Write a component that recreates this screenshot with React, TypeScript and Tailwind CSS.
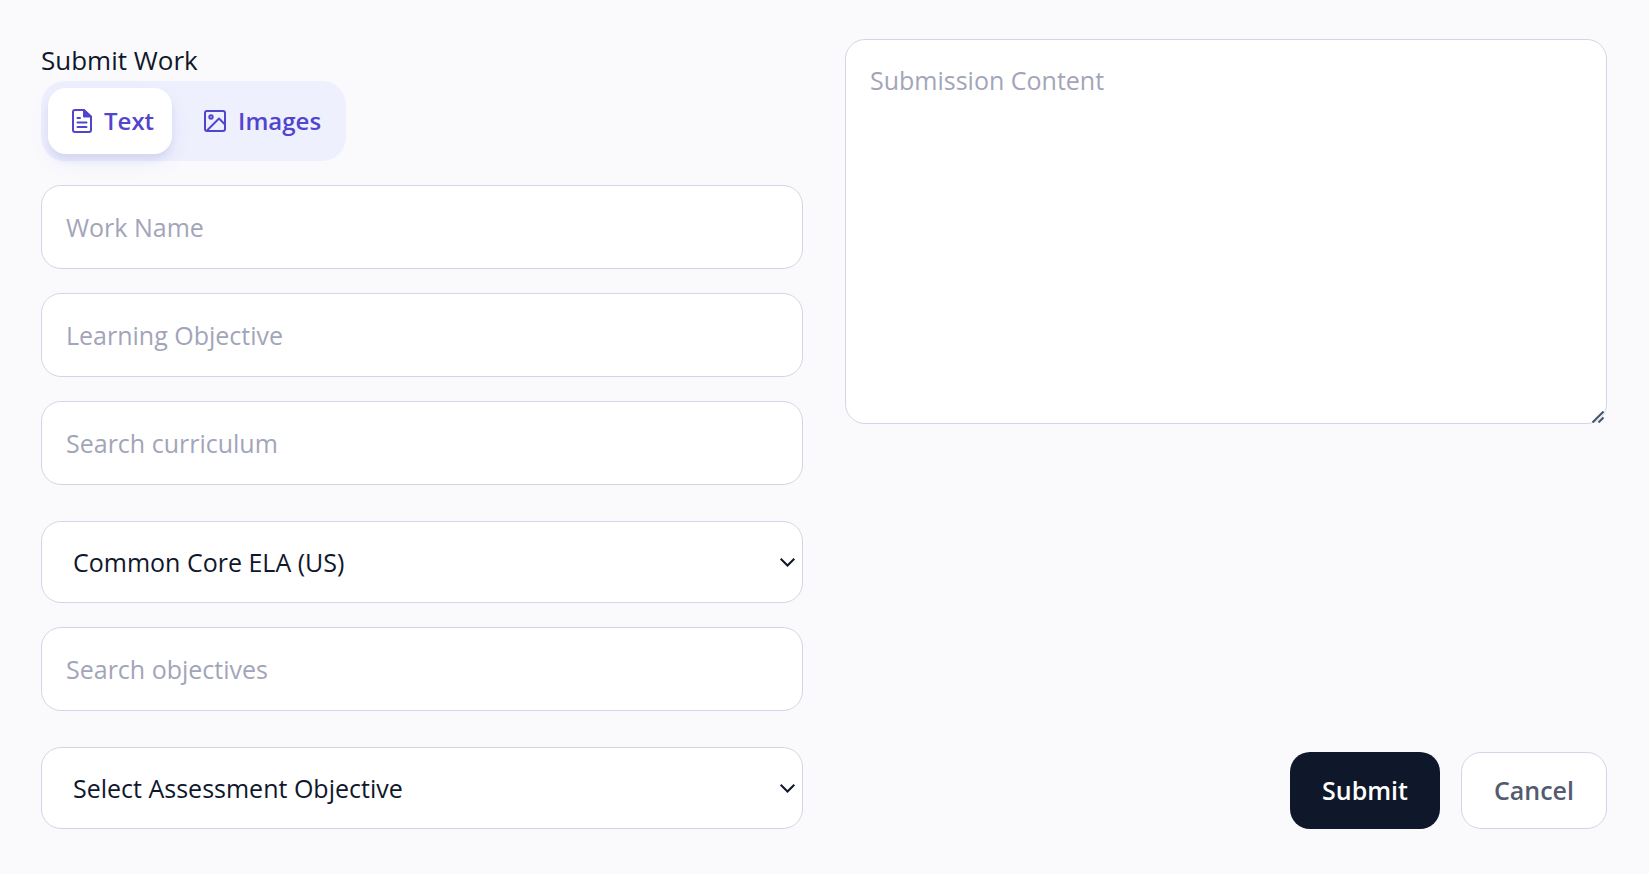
import { useState } from 'react';

type Mode = 'text' | 'images';

const fieldClass =
  'w-full rounded-[20px] border border-[#d0d7e6] bg-white text-[25px] leading-9 text-slate-900 placeholder:text-[#a2a5b9] focus:outline-none focus:border-indigo-400';

const tabClass = 'flex h-[66px] items-center gap-3 rounded-[18px] pl-6 pr-[18px] text-[24px] font-semibold text-[#5145cd]';

const activeTabClass = 'bg-white shadow-[0_8px_18px_rgba(99,102,241,0.1),0_6px_6px_rgba(30,41,59,0.06)]';

function TextIcon() {
  return (
    <svg className="h-6 w-5" viewBox="0 0 20 24" fill="none" stroke="currentColor" strokeWidth={2} strokeLinecap="round" strokeLinejoin="round" aria-hidden="true">
      <path d="M3 1h9l7 6.500V21a2 2 0 0 1-2 2H3a2 2 0 0 1-2-2V3a2 2 0 0 1 2-2z" />
      <path d="M12 1.500v6h6.500z" fill="currentColor" />
      <path d="M5.500 9h2.500M5.500 13.500h9M5.500 18h9" />
    </svg>
  );
}

function ImageIcon() {
  return (
    <svg className="h-[22px] w-[22px]" viewBox="0 0 22 22" fill="none" stroke="currentColor" strokeWidth={2} strokeLinecap="round" strokeLinejoin="round" aria-hidden="true">
      <rect x="1" y="1" width="20" height="20" rx="2" />
      <circle cx="7" cy="7" r="1.700" />
      <path d="M3.500 20L15 8.500l6 6" />
    </svg>
  );
}

interface FieldProps {
  label: string;
}

function TextField({ label }: FieldProps) {
  return <input type="text" aria-label={label} placeholder={label} className={`${fieldClass} h-[84px] px-6`} />;
}

function SelectField({ label, option }: FieldProps & { option: string }) {
  return (
    <div className="relative pt-3">
      <select aria-label={label} className={`${fieldClass} block h-[82px] appearance-none pl-[31px] pr-12`}>
        <option>{option}</option>
      </select>
      <svg className="pointer-events-none absolute right-2 bottom-9 h-[9px] w-[15px] text-slate-900" viewBox="0 0 15 9" fill="none" stroke="currentColor" strokeWidth={2} aria-hidden="true">
        <path d="M0.700 0.800L7.500 7.500L14.300 0.800" />
      </svg>
    </div>
  );
}

export default function App() {
  const [mode, setMode] = useState<Mode>('text');

  return (
    <main className="min-h-screen bg-[#fafafd] pt-[39px] pr-[42px] pb-11 pl-[41px] font-['Open_Sans',sans-serif] text-slate-900">
      <form onSubmit={(e) => e.preventDefault()} className="grid grid-cols-2 gap-x-[42px]">
        <div className="flex flex-col gap-6">
          <div className="pt-1">
            <h1 className="pb-1 text-[26px] leading-[34px]">Submit Work</h1>
            <div className="inline-flex h-20 items-center gap-2 rounded-3xl bg-[#eef0fd] px-[7px] align-top">
              <button
                type="button"
                onClick={() => setMode('text')}
                className={`${tabClass} ${mode === 'text' ? activeTabClass : ''}`}
              >
                <TextIcon />
                Text
              </button>
              <button
                type="button"
                onClick={() => setMode('images')}
                className={`${tabClass} ${mode === 'images' ? activeTabClass : ''}`}
              >
                <ImageIcon />
                Images
              </button>
            </div>
          </div>
          <TextField label="Work Name" />
          <TextField label="Learning Objective" />
          <TextField label="Search curriculum" />
          <SelectField label="Curriculum" option="Common Core ELA (US)" />
          <TextField label="Search objectives" />
          <SelectField label="Assessment objective" option="Select Assessment Objective" />
        </div>

        <div className="flex flex-col justify-between">
          <div className="relative">
            <textarea
              aria-label="Submission Content"
              placeholder="Submission Content"
              className={`${fieldClass} block h-[385px] resize-none px-6 py-[22px]`}
            />
            <svg className="pointer-events-none absolute right-[3px] bottom-px h-3 w-3 text-slate-600" viewBox="0 0 12 12" stroke="currentColor" strokeWidth={2} aria-hidden="true">
              <path d="M0.500 11.500L11.500 0.500M6.500 11.500L11.500 6.500" />
            </svg>
          </div>
          <div className="flex justify-end gap-[21px]">
            <button type="submit" className="h-[77px] rounded-[20px] bg-[#0f172a] px-8 text-[25px] font-semibold text-white">
              Submit
            </button>
            <button type="button" className="h-[77px] rounded-[20px] border border-[#d0d7e6] bg-white px-8 text-[25px] font-semibold text-[#545b70]">
              Cancel
            </button>
          </div>
        </div>
      </form>
    </main>
  );
}
